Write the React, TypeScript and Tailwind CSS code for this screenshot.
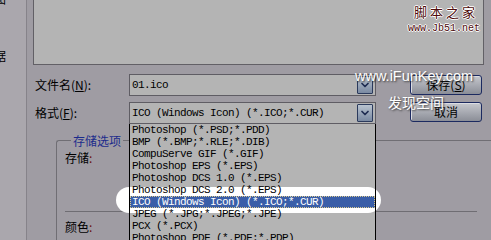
import { ChevronDown } from 'lucide-react'

const formats = [
  'Photoshop (*.PSD;*.PDD)',
  'BMP (*.BMP;*.RLE;*.DIB)',
  'CompuServe GIF (*.GIF)',
  'Photoshop EPS (*.EPS)',
  'Photoshop DCS 1.0 (*.EPS)',
  'Photoshop DCS 2.0 (*.EPS)',
  'ICO (Windows Icon) (*.ICO;*.CUR)',
  'JPEG (*.JPG;*.JPEG;*.JPE)',
  'PCX (*.PCX)',
  'Photoshop PDF (*.PDF;*.PDP)',
]

const mono = "font-['Liberation_Mono',monospace] text-[11px] tracking-[-0.6px] whitespace-pre"

function ComboBox({ value }: { value: string }) {
  return (
    <div className="flex h-[22px] w-[247px] items-center border border-[#5f5d64] bg-[#b4b4b4] pl-[2px] pr-[2px]">
      <span className={`flex-1 ${mono}`}>{value}</span>
      <div className="flex h-[18px] w-[16px] items-center justify-center rounded-[1px] border border-[#2b3a5c] bg-linear-to-b from-[#b9c3cf] to-[#7a8aa2]">
        <ChevronDown size={12} strokeWidth={3.5} className="text-[#1e2c52]" />
      </div>
    </div>
  )
}

function DialogButton({ label }: { label: React.ReactNode }) {
  return (
    <button className="flex h-[20px] w-[72px] items-center justify-center rounded-[3px] border border-[#1c2a60] bg-linear-to-b from-[#c6c8ce] to-[#8b8e97] text-[12px] leading-none text-black shadow-[inset_1px_1px_0_#dcdde2]">
      {label}
    </button>
  )
}

export default function App() {
  return (
    <div className="relative flex h-[240px] w-[491px] overflow-hidden bg-[#9f9ca3] font-['Noto_Sans_CJK_SC',sans-serif] text-[12px] leading-[12px] text-black">
      {/* left strip */}
      <aside className="flex w-[27px] shrink-0 flex-col border-r border-[#86838a] bg-[#aaa7ad]">
        <span className="-ml-[6px] -mt-[7px]">图</span>
        <span className="-ml-[6px] mt-[45px]">据</span>
      </aside>

      <main className="flex flex-1 flex-col pl-[6px]">
        {/* preview panel */}
        <div className="h-[65px] w-[451px] shrink-0 border-b border-l border-r border-[#626066] bg-[#b4b4b4]" />

        {/* filename row */}
        <div className="mt-[9px] flex items-start">
          <label className="flex h-[22px] w-[96px] items-center pl-[2px]">
            文件名(<span className="underline">N</span>):
          </label>
          <ComboBox value="01.ico" />
          <div className="ml-[34px] mt-[1px]">
            <DialogButton label={<>保存(<span className="underline">S</span>)</>} />
          </div>
        </div>

        {/* format row */}
        <div className="mt-[6px] flex items-start">
          <label className="flex h-[22px] w-[96px] items-center pl-[2px]">
            格式(<span className="underline">F</span>):
          </label>
          <ComboBox value="ICO (Windows Icon) (*.ICO;*.CUR)" />
          <div className="ml-[34px]">
            <DialogButton label="取消" />
          </div>
        </div>

        {/* storage options */}
        <fieldset className="ml-[23px] mt-[10px] flex-1 rounded-tl-[3px] border-0 border-l border-t border-[#706e74] pl-[8px]">
          <legend className="ml-[6px] px-[2px] leading-[13px] text-[#1c2b8c]">存储选项</legend>
          <div className="mt-[5px]">
            存储<span className="text-[#6a1212]">:</span>
          </div>
          <div className="mt-[47px] h-0 w-[412px] border-t border-[#6f6d73]" />
          <div className="mt-[9px]">
            颜色<span className="text-[#6a1212]">:</span>
          </div>
        </fieldset>
      </main>

      {/* open dropdown list */}
      <div className="absolute left-[129px] top-[124px] h-[120px] w-[247px] bg-[#b4b4b4]">
        <div className="absolute -left-[13px] top-[63px] h-[26px] w-[265px] rounded-full bg-white" />
        <ul className="relative pl-[1px] pr-[1px]">
          {formats.map((f, i) => (
            <li
              key={f}
              className={`h-[12px] pl-[2px] leading-[12px] ${mono} ${
                i === 6 ? 'bg-[#3a5ea8] text-white outline outline-1 -outline-offset-1 outline-dotted outline-[#d9c98e]' : ''
              }`}
            >
              {f}
            </li>
          ))}
        </ul>
        <div className="pointer-events-none absolute inset-0 border-l border-r border-black" />
      </div>

      {/* site watermarks */}
      <div className="absolute left-[414px] top-[5px] font-['Noto_Sans_CJK_SC',sans-serif] text-[13px] leading-[14px] tracking-[3px] text-[#4e0c0c] [text-shadow:1px_0_0_#fff,-1px_0_0_#fff,0_1px_0_#fff,0_-1px_0_#fff]">
        脚本之家
      </div>
      <div className="absolute left-[408px] top-[23px] font-['Liberation_Mono',monospace] text-[10px] leading-[11px] text-[#4e0c0c] [text-shadow:1px_0_0_#fff,-1px_0_0_#fff,0_1px_0_#fff,0_-1px_0_#fff]">
        www.Jb51.net
      </div>
      <div className="absolute left-[355px] top-[68px] font-['Liberation_Sans',sans-serif] text-[14.5px] leading-[17px] text-white [text-shadow:1px_1px_2px_#3a3a3a]">
        www.iFunKey.com
      </div>
      <div className="absolute left-[388px] top-[94px] text-[14px] leading-[16px] text-white [text-shadow:1px_1px_2px_#3a3a3a]">
        发现空间
      </div>
    </div>
  )
}
